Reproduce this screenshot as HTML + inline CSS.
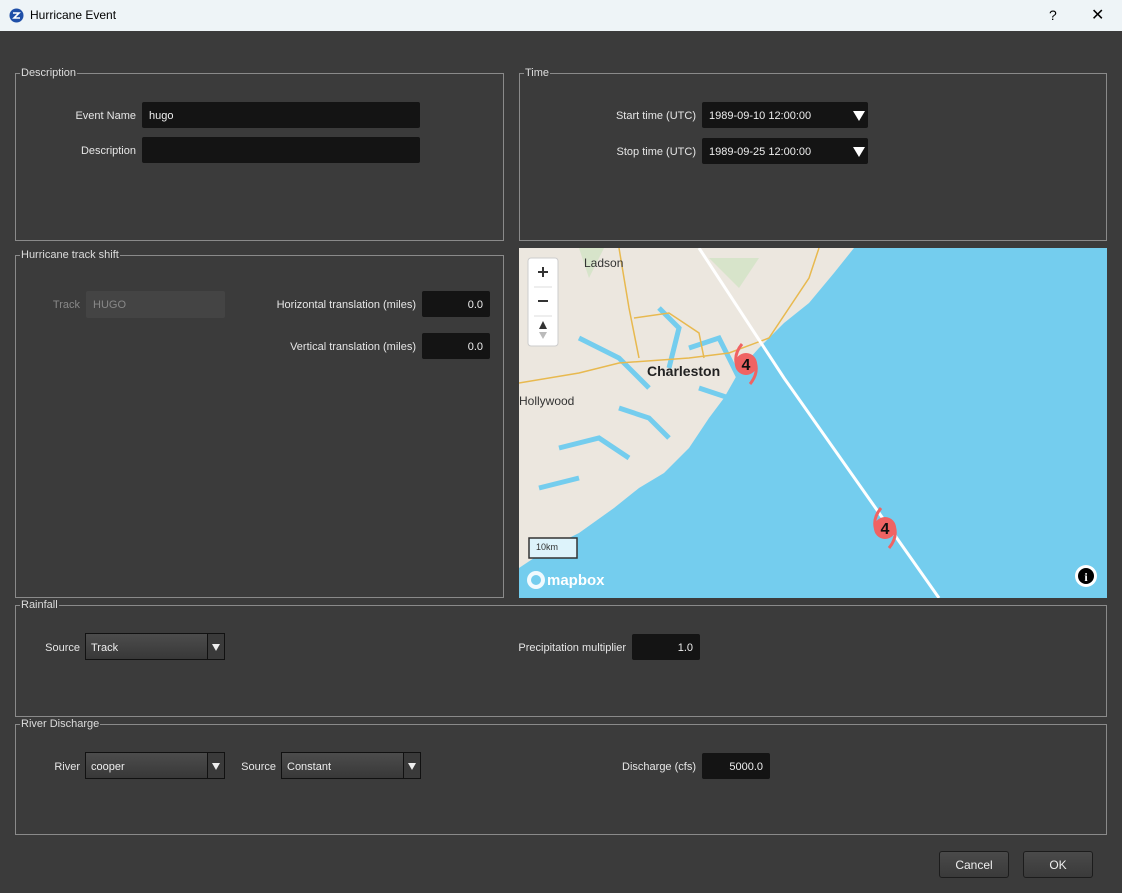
<!DOCTYPE html>
<html><head><meta charset="utf-8"><style>
*{box-sizing:border-box;margin:0;padding:0}
body{width:1122px;height:893px;background:#3b3b3b;font-family:"Liberation Sans",sans-serif;font-size:11px;color:#e6e6e6;position:relative;overflow:hidden}
.a{position:absolute}
.title{left:0;top:0;width:1122px;height:31px;background:#eef4f7;color:#000;font-size:12px}
.gb{position:absolute;border:1px solid #8a8a8a}
.gl{position:absolute;top:-7px;left:4px;background:#3b3b3b;padding:0 1px;font-size:11px;color:#ddd}
.in{position:absolute;background:#141414;border-radius:2px;color:#eee;padding-left:7px;line-height:29px}
.num{text-align:right;padding-right:7px}
.lb{position:absolute;text-align:right;line-height:29px}
.cb{position:absolute;height:27px;border:1px solid #111;background:linear-gradient(#4c4c4c,#383838);line-height:29px;padding-left:5px;color:#eee}
.cb:after{content:"";position:absolute;right:0;top:0;width:16px;height:25px;border-left:1px solid #111;background:#3a3a3a}
.cb i{position:absolute;right:4px;top:10px;width:0;height:0;border-left:4px solid transparent;border-right:4px solid transparent;border-top:7px solid #eee;z-index:2}
.dt i{position:absolute;right:3px;top:9px;border-left:6px solid transparent;border-right:6px solid transparent;border-top:10px solid #fff}
.btn{position:absolute;height:27px;width:70px;border:1px solid #1c1c1c;border-radius:3px;background:linear-gradient(#4a4a4a,#3a3a3a);text-align:center;line-height:27px;color:#eee;font-size:12px}
</style></head><body>
<div class="a title">
<svg class="a" style="left:9px;top:8px" width="15" height="15" viewBox="0 0 15 15"><circle cx="7.5" cy="7.5" r="7" fill="#1f4fa8"/><path d="M4 5h6l-5 5h6" stroke="#fff" stroke-width="1.6" fill="none"/></svg>
<span class="a" style="left:30px;top:8px">Hurricane Event</span>
<span class="a" style="left:1049px;top:7px;font-size:14px">?</span>
<span class="a" style="left:1091px;top:5px;font-size:16px">✕</span>
</div>

<div class="gb" style="left:15px;top:73px;width:489px;height:168px"><span class="gl">Description</span></div>
<div class="lb" style="left:40px;top:102px;width:96px">Event Name</div>
<div class="in" style="left:142px;top:102px;width:278px;height:26px">hugo</div>
<div class="lb" style="left:40px;top:137px;width:96px">Description</div>
<div class="in" style="left:142px;top:137px;width:278px;height:26px"></div>

<div class="gb" style="left:519px;top:73px;width:588px;height:168px"><span class="gl">Time</span></div>
<div class="lb" style="left:560px;top:102px;width:136px">Start time (UTC)</div>
<div class="in dt" style="left:702px;top:102px;width:166px;height:26px">1989-09-10 12:00:00<i class="a"></i></div>
<div class="lb" style="left:560px;top:138px;width:136px">Stop time (UTC)</div>
<div class="in dt" style="left:702px;top:138px;width:166px;height:26px">1989-09-25 12:00:00<i class="a"></i></div>

<div class="gb" style="left:15px;top:255px;width:489px;height:343px"><span class="gl">Hurricane track shift</span></div>
<div class="lb" style="left:40px;top:291px;width:40px;color:#888">Track</div>
<div class="in" style="left:86px;top:291px;width:139px;height:27px;background:#444;color:#888">HUGO</div>
<div class="lb" style="left:230px;top:291px;width:186px">Horizontal translation (miles)</div>
<div class="in num" style="left:422px;top:291px;width:68px;height:26px">0.0</div>
<div class="lb" style="left:230px;top:333px;width:186px">Vertical translation (miles)</div>
<div class="in num" style="left:422px;top:333px;width:68px;height:26px">0.0</div>

<svg class="a" style="left:519px;top:248px" width="588" height="350" viewBox="0 0 588 350">
<rect width="588" height="350" fill="#74cdee"/>
<path d="M0 0H335L315 25L290 55L265 75L240 100L222 120L205 150L190 170L170 200L145 225L120 240L95 260L60 285L30 300L0 320Z" fill="#ece7df"/>
<path d="M60 90L100 110L130 140M140 60L160 80L150 120M100 160L130 170L150 190M40 200L80 190L110 210M20 240L60 230M170 100L200 90L220 130M180 140L210 150" stroke="#74cdee" stroke-width="5" fill="none"/>
<path d="M0 135L60 125L100 115L170 110L210 105L250 90L290 30L300 0M100 0L110 60L120 110M115 70L150 65L180 85L185 110" stroke="#e8b94f" stroke-width="1.5" fill="none"/>
<path d="M180 0L265 130L420 350" stroke="#fff" stroke-width="3" fill="none"/>
<path d="M60 0H85L70 30Z M190 10h50l-20 30Z" fill="#cfe3c0" opacity=".7"/>
<text x="65" y="19" font-size="12" fill="#333" font-family="Liberation Sans">Ladson</text>
<text x="128" y="128" font-size="14" font-weight="bold" fill="#222" font-family="Liberation Sans">Charleston</text>
<text x="0" y="157" font-size="12" fill="#333" font-family="Liberation Sans">Hollywood</text>
<g transform="translate(227,116)"><path d="M-4 -20Q-14 -8 -8 5M4 20Q14 8 8 -5" stroke="#f06363" stroke-width="3" fill="none"/><circle r="11" fill="#f06363"/><text x="0" y="6" text-anchor="middle" font-size="16" font-weight="bold" font-family="Liberation Sans" fill="#111">4</text></g>
<g transform="translate(366,280)"><path d="M-4 -20Q-14 -8 -8 5M4 20Q14 8 8 -5" stroke="#f06363" stroke-width="3" fill="none"/><circle r="11" fill="#f06363"/><text x="0" y="6" text-anchor="middle" font-size="16" font-weight="bold" font-family="Liberation Sans" fill="#111">4</text></g>
<rect x="9" y="10" width="30" height="88" rx="3" fill="#fff" stroke="#ccc"/>
<path d="M15 39H33M15 68H33" stroke="#ddd"/>
<path d="M19 24h10M24 19v10M19 53h10" stroke="#333" stroke-width="2"/>
<path d="M24 73l-4 8h8z" fill="#333"/><path d="M24 91l-4 -7h8z" fill="#bbb"/>
<rect x="10" y="290" width="48" height="20" fill="#ddf3fb" stroke="#333" stroke-width="1.5"/>
<text x="17" y="302" font-size="9" fill="#333" font-family="Liberation Sans">10km</text>
<circle cx="17" cy="332" r="9" fill="#fff" opacity=".9"/><circle cx="17" cy="332" r="5" fill="#74cdee"/>
<text x="28" y="337" font-size="15" font-weight="bold" fill="#fff" font-family="Liberation Sans">mapbox</text>
<circle cx="567" cy="328" r="11" fill="#fff"/><circle cx="567" cy="328" r="8" fill="#000"/><text x="567" y="333" text-anchor="middle" font-size="12" font-weight="bold" fill="#fff" font-family="Liberation Serif">i</text>
</svg>

<div class="gb" style="left:15px;top:605px;width:1092px;height:112px"><span class="gl">Rainfall</span></div>
<div class="lb" style="left:30px;top:634px;width:50px">Source</div>
<div class="cb" style="left:85px;top:633px;width:140px">Track<i></i></div>
<div class="lb" style="left:480px;top:634px;width:146px">Precipitation multiplier</div>
<div class="in num" style="left:632px;top:634px;width:68px;height:26px">1.0</div>

<div class="gb" style="left:15px;top:724px;width:1092px;height:111px"><span class="gl">River Discharge</span></div>
<div class="lb" style="left:30px;top:753px;width:50px">River</div>
<div class="cb" style="left:85px;top:752px;width:140px">cooper<i></i></div>
<div class="lb" style="left:230px;top:753px;width:46px">Source</div>
<div class="cb" style="left:281px;top:752px;width:140px">Constant<i></i></div>
<div class="lb" style="left:560px;top:753px;width:136px">Discharge (cfs)</div>
<div class="in num" style="left:702px;top:753px;width:68px;height:26px">5000.0</div>

<div class="btn" style="left:939px;top:851px">Cancel</div>
<div class="btn" style="left:1023px;top:851px">OK</div>
</body></html>
